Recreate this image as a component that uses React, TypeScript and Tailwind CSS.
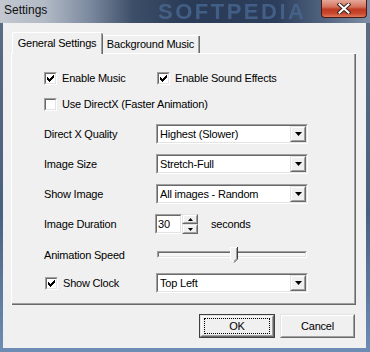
import React from "react";

const Sunken = ({ className, bg, children }: { className: string; bg?: string; children?: React.ReactNode }) => (
  <div className={`border border-t-[#a0a0a0] border-l-[#a0a0a0] border-r-white border-b-white ${className}`}>
    <div
      className={`h-full w-full border border-t-[#696969] border-l-[#696969] border-r-[#e3e3e3] border-b-[#e3e3e3] ${
        bg ?? "bg-white"
      }`}
    >
      {children}
    </div>
  </div>
);

const Raised = ({ className, children }: { className: string; children?: React.ReactNode }) => (
  <div className={`border border-t-[#e3e3e3] border-l-[#e3e3e3] border-r-[#696969] border-b-[#696969] bg-[#f0f0f0] ${className}`}>
    <div className="h-full w-full border border-t-white border-l-white border-r-[#a0a0a0] border-b-[#a0a0a0] flex items-center justify-center">
      {children}
    </div>
  </div>
);

const Check = () => (
  <svg width="7" height="7" viewBox="0 0 7 7" className="block">
    <rect x="6" y="0" width="1" height="1" />
    <rect x="5" y="1" width="2" height="1" />
    <rect x="0" y="2" width="1" height="1" />
    <rect x="4" y="2" width="3" height="1" />
    <rect x="0" y="3" width="2" height="1" />
    <rect x="3" y="3" width="3" height="1" />
    <rect x="0" y="4" width="5" height="1" />
    <rect x="1" y="5" width="3" height="1" />
    <rect x="2" y="6" width="1" height="1" />
  </svg>
);

const CheckBox = ({ checked, label, offset }: { checked: boolean; label: string; offset?: boolean }) => (
  <div className={`flex items-center gap-[5px] ${offset ? "ml-[1px]" : ""}`}>
    <Sunken className="w-[13px] h-[13px] shrink-0">
      <div className="h-full w-full flex items-center justify-center">{checked && <Check />}</div>
    </Sunken>
    <span>{label}</span>
  </div>
);

const Combo = ({ value }: { value: string }) => (
  <Sunken className="w-[152px] h-[20px]">
    <div className="flex h-full">
      <span className="flex-1 pl-[2px] leading-[16px] whitespace-nowrap">{value}</span>
      <Raised className="w-[16px] h-[16px]">
        <svg width="7" height="4" viewBox="0 0 7 4">
          <path d="M0 0h7L3.5 4z" fill="#000" />
        </svg>
      </Raised>
    </div>
  </Sunken>
);

export default function App() {
  return (
    <div className="w-[370px] h-[352px] flex flex-col bg-[linear-gradient(to_bottom,#5d6c82,#48607f_60%,#6d8db5)] font-['Liberation_Sans',Arial,sans-serif] text-black overflow-hidden">
      {/* title bar */}
      <div className="relative h-[23px] shrink-0 bg-[linear-gradient(to_right,#c3c8d0_0%,#b2bac6_12%,#7d8ba0_24%,#3d4e68_36%,#2a3b57_50%,#2c3e5b_75%,#4c5f7b_86%,#7e8ea6_100%)] overflow-hidden">
        <span className="absolute left-[158px] top-[1px] text-[22px] leading-[22px] font-bold tracking-[2.5px] text-[#4a6791] opacity-80 blur-[0.4px]">
          SOFTPEDIA
        </span>
        <span className="absolute left-[4px] top-[2px] text-[12px] leading-[16px] text-[#101010]">Settings</span>
        <div className="absolute right-[3px] top-0 w-[46px] h-[18px] rounded-b-[4px] border border-t-0 border-[#4a1a12] bg-[linear-gradient(to_bottom,#e6a89a_0%,#d5735d_40%,#bf3a22_55%,#c9492f_80%,#dd7a5c_100%)] flex items-center justify-center">
          <svg width="14" height="11" viewBox="0 0 14 11">
            <path d="M2.5 1.5L11.5 9.5M11.5 1.5L2.5 9.5" stroke="#3b2420" strokeWidth="4" strokeLinecap="square" />
            <path d="M2.5 1.5L11.5 9.5M11.5 1.5L2.5 9.5" stroke="#fff" strokeWidth="2" strokeLinecap="square" />
          </svg>
        </div>
      </div>

      {/* client area */}
      <div className="ml-[3px] mr-[4px] mb-[4px] h-[325px] bg-[#f0f0f0] pt-[9px] pl-[8px] pr-[10px] text-[11px] tracking-[-0.2px] flex flex-col">
        {/* tabs */}
        <div className="flex items-end h-[21px] pl-[1px]">
          <div className="relative z-10 -mb-px h-[22px] w-[91px] bg-[#f0f0f0] border-l border-t border-white rounded-tl-[2px]">
            <div className="h-full border-r border-[#696969] rounded-tr-[2px]">
              <div className="h-full border-r border-[#a0a0a0] flex items-center justify-center pb-[1px]">
                General Settings
              </div>
            </div>
          </div>
          <div className="h-[18px] w-[97px] border-t border-white rounded-tr-[2px]">
            <div className="h-full border-r border-[#696969]">
              <div className="h-full border-r border-[#a0a0a0] flex items-center justify-center">Background Music</div>
            </div>
          </div>
        </div>

        {/* panel */}
        <div className="h-[252px] w-[345px] border-l border-t border-white">
          <div className="h-full border-r border-b border-[#696969]">
            <div className="h-full border-r border-b border-[#a0a0a0] pl-[32px] pt-[14px] flex flex-col">
              <div className="h-[20px] flex items-center">
                <div className="w-[113px]">
                  <CheckBox checked label="Enable Music" />
                </div>
                <CheckBox checked label="Enable Sound Effects" />
              </div>
              <div className="h-[20px] mt-[6px] flex items-center">
                <CheckBox checked={false} label="Use DirectX (Faster Animation)" />
              </div>
              <div className="h-[20px] mt-[10px] flex items-center">
                <span className="w-[112px]">Direct X Quality</span>
                <Combo value="Highest (Slower)" />
              </div>
              <div className="h-[20px] mt-[10px] flex items-center">
                <span className="w-[112px]">Image Size</span>
                <Combo value="Stretch-Full" />
              </div>
              <div className="h-[20px] mt-[10px] flex items-center">
                <span className="w-[112px]">Show Image</span>
                <Combo value="All images - Random" />
              </div>
              <div className="h-[20px] mt-[10px] flex items-center">
                <span className="w-[111px]">Image Duration</span>
                <Sunken className="w-[27px] h-[20px]">
                  <span className="block pl-[1px] leading-[16px]">30</span>
                </Sunken>
                <div className="w-[16px] h-[20px] flex flex-col">
                  <Raised className="w-[16px] h-[10px]">
                    <svg width="5" height="3" viewBox="0 0 5 3">
                      <path d="M2.5 0L5 3H0z" fill="#000" />
                    </svg>
                  </Raised>
                  <Raised className="w-[16px] h-[10px]">
                    <svg width="5" height="3" viewBox="0 0 5 3">
                      <path d="M0 0h5L2.5 3z" fill="#000" />
                    </svg>
                  </Raised>
                </div>
                <span className="ml-[13px]">seconds</span>
              </div>
              <div className="h-[20px] mt-[11px] flex items-center">
                <span className="w-[113px]">Animation Speed</span>
                <div className="relative w-[150px] h-[20px]">
                  <Sunken className="w-[150px] h-[7px] mt-[6px]" bg="bg-[#f7f7f7]" />
                  <svg width="8" height="16" viewBox="0 0 8 16" className="absolute left-[73px] top-[2px]">
                    <path d="M0 0H8V12L4 16L0 12Z" fill="#f0f0f0" />
                    <path d="M0.5 12V0.5H7" stroke="#fff" fill="none" />
                    <path d="M7.5 0V12L4 15.5" stroke="#404040" fill="none" />
                    <path d="M6.5 1V11.6L4 14.2" stroke="#a0a0a0" fill="none" />
                    <path d="M0.5 12L3.5 15" stroke="#fff" fill="none" />
                  </svg>
                </div>
              </div>
              <div className="h-[20px] mt-[8px] flex items-center">
                <div className="w-[112px]">
                  <CheckBox checked label="Show Clock" offset />
                </div>
                <Combo value="Top Left" />
              </div>
            </div>
          </div>
        </div>

        {/* buttons */}
        <div className="flex justify-end gap-[5px] mt-[9px] pr-[1px]">
          <div className="w-[76px] h-[24px] border border-[#404040]">
            <Raised className="w-full h-full">
              <div className="w-[66px] h-[16px] border border-dotted border-black flex items-center justify-center">OK</div>
            </Raised>
          </div>
          <Raised className="w-[75px] h-[24px]">Cancel</Raised>
        </div>
      </div>
    </div>
  );
}
